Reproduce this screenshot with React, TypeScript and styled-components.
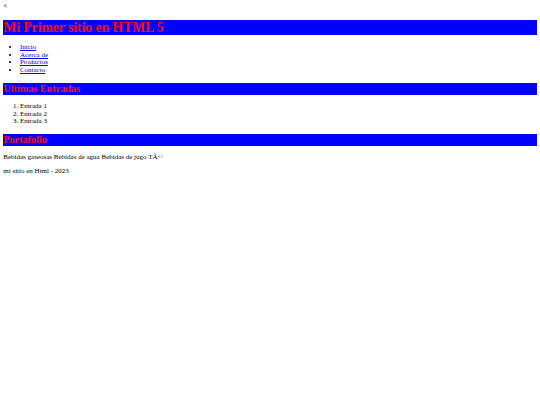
import React from 'react';
import styled, { createGlobalStyle } from 'styled-components';

// the reference page is shown at about 41.5% zoom, so every default size is scaled
const GlobalStyle = createGlobalStyle`
  html, body {
    background: #ffffff;
  }
  body {
    margin: 3.3px;
    font-family: 'Liberation Serif', 'Times New Roman', serif;
    font-size: 7px;
    line-height: 7.67px;
    color: #000000;
  }
`;

const Stray = styled.span`
  color: #000000;
`;

const Title = styled.h1`
  font-size: 13.6px;
  line-height: 15.3px;
  margin: 8.9px 0;
  background: #0000ff;
  color: #ff0000;
  font-weight: bold;
`;

const Section = styled.h2`
  font-size: 10.2px;
  line-height: 11.5px;
  margin: 8.3px 0;
  background: #0000ff;
  color: #ff0000;
  font-weight: bold;
`;

const Nav = styled.ul`
  margin: 6.64px 0;
  padding-left: 16.6px;
`;

const Entries = styled.ol`
  margin: 6.64px 0;
  padding-left: 16.6px;
`;

const Link = styled.a`
  color: #0000ee;
  text-decoration: underline;
`;

const Text = styled.p`
  margin: 6.64px 0;
`;

const links = ['Inicio', 'Acerca de', 'Productos', 'Contacto'];
const entries = ['Entrada 1', 'Entrada 2', 'Entrada 3'];

const App: React.FC = () => {
  return (
    <>
      <GlobalStyle />
      <Stray>&lt;</Stray>
      <Title>Mi Primer sitio en HTML 5</Title>
      <Nav>
        {links.map((l) => (
          <li key={l}>
            <Link href="#">{l}</Link>
          </li>
        ))}
      </Nav>
      <Section>Ultimas Entradas</Section>
      <Entries>
        {entries.map((e) => (
          <li key={e}>{e}</li>
        ))}
      </Entries>
      <Section>Portafolio</Section>
      <Text>Bebidas gaseosas Bebidas de agua Bebidas de jugo TÃ©</Text>
      <Text>mi sitio en Html - 2023</Text>
    </>
  );
};

export default App;
